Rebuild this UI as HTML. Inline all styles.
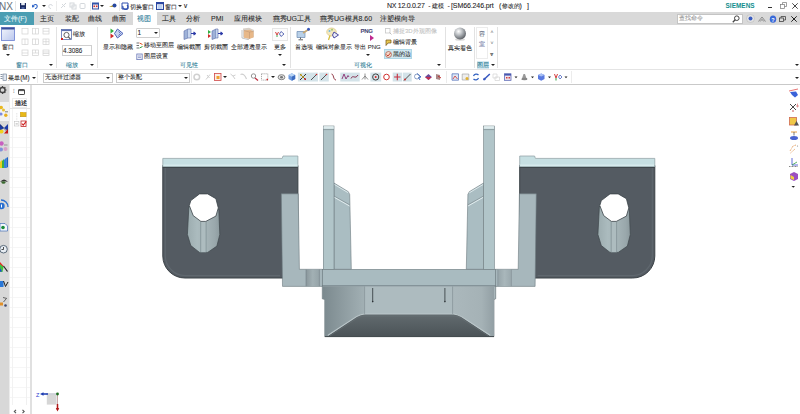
<!DOCTYPE html>
<html><head><meta charset="utf-8">
<style>
*{margin:0;padding:0;box-sizing:border-box}
html,body{width:800px;height:414px;overflow:hidden;background:#fff}
body{position:relative;font-family:"Liberation Sans",sans-serif;color:#333}
.a{position:absolute}
.t{position:absolute;white-space:nowrap;font-size:6px;line-height:7px;color:#2a2a2a;-webkit-text-stroke:0.08px currentColor}
.sep{position:absolute;width:1px;background:#e2e2e2}
.arr{position:absolute;width:0;height:0;border-left:2px solid transparent;border-right:2px solid transparent;border-top:2px solid #222}
</style></head><body>

<!-- TITLE BAR -->
<div class="t" style="left:-1px;top:0.5px;font-size:10px;line-height:11px;color:#66707a;letter-spacing:0px;-webkit-text-stroke:0">NX</div>
<div class="sep" style="left:15px;top:1px;height:10px;background:#e6e6e6"></div>
<!-- save -->
<svg class="a" style="left:20px;top:3px" width="6" height="6" viewBox="0 0 6 6"><rect x="0" y="0" width="6" height="6" fill="#1a2a60"/><rect x="1.2" y="0" width="3.6" height="2.2" fill="#e8eef6"/><rect x="1.5" y="4" width="3" height="2" fill="#4a60a0"/></svg>
<!-- undo -->
<svg class="a" style="left:32px;top:3px" width="6" height="6" viewBox="0 0 6 6"><path d="M1.5,3 C2,1 5.5,1 5.2,3.5 C5,5 4,5.5 3,5.5" fill="none" stroke="#2d63c8" stroke-width="1.1"/><path d="M0,1.5 L2.8,4 L0,4.5 Z" fill="#2d63c8"/></svg>
<div class="arr" style="left:41.5px;top:5px"></div>
<svg class="a" style="left:48px;top:3px" width="6" height="6" viewBox="0 0 6 6"><path d="M4.5,3 C4,1 0.5,1 0.8,3.5 C1,5 2,5.5 3,5.5" fill="none" stroke="#d0d4da" stroke-width="1"/></svg>
<div class="sep" style="left:56px;top:1px;height:10px;background:#ececec"></div>
<svg class="a" style="left:60px;top:2px" width="30" height="8" viewBox="0 0 30 8"><path d="M1,6 L6,1 M2,2 L5,5" stroke="#d4d8dc" stroke-width="1"/><rect x="10" y="1" width="4" height="4" fill="none" stroke="#d4d8dc"/><rect x="12" y="3" width="4" height="4" fill="none" stroke="#d4d8dc"/><rect x="20" y="1.5" width="5" height="5" rx="1" fill="none" stroke="#d4d8dc"/></svg>
<div class="sep" style="left:90px;top:1px;height:10px;background:#ececec"></div>
<svg class="a" style="left:92px;top:2px" width="7" height="8" viewBox="0 0 7 8"><rect x="0" y="0.5" width="7" height="7" fill="#3454a8"/><rect x="1" y="2.5" width="5" height="4" fill="#f4e6e6"/><rect x="1.5" y="3.5" width="1.5" height="1.5" fill="#d03030"/><rect x="4" y="3.5" width="1.5" height="1.5" fill="#d03030"/></svg>
<div class="arr" style="left:100px;top:5px"></div>
<svg class="a" style="left:109px;top:3px" width="8" height="6" viewBox="0 0 8 6"><path d="M0,4 L4,2 L6,4 Z" fill="#b8a040"/><circle cx="5.5" cy="2.5" r="2" fill="#2848a0"/></svg>
<div class="sep" style="left:119px;top:1px;height:10px;background:#ececec"></div>
<svg class="a" style="left:121px;top:2px" width="8" height="8" viewBox="0 0 8 8"><path d="M1,1 H7 V7 H1 Z" fill="#fff" stroke="#3050b0" stroke-width="1"/><path d="M2,4 A2.5,2.5 0 1 0 6,3" fill="none" stroke="#3050b0" stroke-width="1.2"/></svg>
<div class="t" style="left:130px;top:2.5px;font-size:6.2px;color:#2a2a2a">切换窗口</div>
<svg class="a" style="left:156px;top:2px" width="8" height="8" viewBox="0 0 8 8"><rect x="0.5" y="0.5" width="7" height="7" fill="#fff" stroke="#2a46a0" stroke-width="1"/><rect x="0.5" y="0.5" width="7" height="1.8" fill="#2a46a0"/><rect x="1.5" y="3" width="5" height="4" fill="#bcd0f0"/></svg>
<div class="t" style="left:165px;top:2.5px;font-size:6.2px;color:#2a2a2a">窗口</div>
<div class="arr" style="left:177.5px;top:5px"></div>
<div class="t" style="left:183px;top:1.5px;font-size:7px;color:#2a2a2a">&#x2228;</div>
<div class="t" style="left:387px;top:2px;font-size:7px;line-height:8px;color:#222;letter-spacing:-0.28px">NX 12.0.0.27</div>
<div class="t" style="left:428.3px;top:2px;font-size:7px;line-height:8px;color:#222">-</div>
<div class="t" style="left:431.5px;top:2px;font-size:6.3px;line-height:8px;color:#222">建模</div>
<div class="t" style="left:447.5px;top:2px;font-size:7px;line-height:8px;color:#222">-</div>
<div class="t" style="left:451px;top:2px;font-size:7px;line-height:8px;color:#222;letter-spacing:-0.1px">[SM66.246.prt</div>
<div class="t" style="left:499px;top:2px;font-size:7px;line-height:8px;color:#222">(</div>
<div class="t" style="left:502px;top:2.3px;font-size:5.8px;line-height:8px;color:#222">修改的</div>
<div class="t" style="left:519.5px;top:2px;font-size:7px;line-height:8px;color:#222">)</div>
<div class="t" style="left:527px;top:2px;font-size:7px;line-height:8px;color:#222">]</div>
<div class="t" style="left:725.5px;top:2.3px;font-size:6.4px;line-height:8px;color:#118e8e;font-weight:bold;letter-spacing:0.05px;transform:scaleY(1.12);-webkit-text-stroke:0">SIEMENS</div>
<div class="a" style="left:768px;top:7px;width:4px;height:1px;background:#333"></div>
<svg class="a" style="left:780px;top:2px" width="7" height="7" viewBox="0 0 7 7"><rect x="0.5" y="2.5" width="4" height="4" fill="none" stroke="#777" stroke-width="0.7"/><path d="M2.5,2.5 V0.5 H6.5 V4.5 H4.5" fill="none" stroke="#777" stroke-width="0.7"/></svg>
<svg class="a" style="left:791.5px;top:2.5px" width="6" height="6" viewBox="0 0 6 6"><path d="M0.3,0.3 L5.7,5.7 M5.7,0.3 L0.3,5.7" stroke="#333" stroke-width="0.9"/></svg>

<!-- TAB BAR -->
<div class="a" style="left:0;top:12px;width:800px;height:13px;background:#d9d9d9"></div>
<div class="a" style="left:0;top:12px;width:34px;height:13px;background:#4b9db2"></div>
<div class="t" style="left:4px;top:15px;color:#e8f5f8;font-size:7px;line-height:8px">文件(F)</div>
<div class="a" style="left:132.5px;top:12px;width:24.5px;height:13px;background:#fff"></div>
<div class="t" style="left:40px;top:15px;font-size:7px;line-height:8px;color:#2a2a2a">主页</div>
<div class="t" style="left:64.5px;top:15px;font-size:7px;line-height:8px;color:#2a2a2a">装配</div>
<div class="t" style="left:88px;top:15px;font-size:7px;line-height:8px;color:#2a2a2a">曲线</div>
<div class="t" style="left:112px;top:15px;font-size:7px;line-height:8px;color:#2a2a2a">曲面</div>
<div class="t" style="left:137px;top:15px;font-size:7px;line-height:8px;color:#2d7d99">视图</div>
<div class="t" style="left:162px;top:15px;font-size:7px;line-height:8px;color:#2a2a2a">工具</div>
<div class="t" style="left:186px;top:15px;font-size:7px;line-height:8px;color:#2a2a2a">分析</div>
<div class="t" style="left:211px;top:15px;font-size:7px;line-height:8px;color:#2a2a2a">PMI</div>
<div class="t" style="left:233.5px;top:15px;font-size:7px;line-height:8px;color:#2a2a2a">应用模块</div>
<div class="t" style="left:272.5px;top:15px;font-size:7px;line-height:8px;color:#2a2a2a">燕秀UG工具</div>
<div class="t" style="left:320px;top:15px;font-size:7px;line-height:8px;color:#2a2a2a">燕秀UG模具8.60</div>
<div class="t" style="left:380px;top:15px;font-size:7px;line-height:8px;color:#2a2a2a">注塑模向导</div>
<div class="a" style="left:676.5px;top:13.5px;width:66px;height:10px;background:#fff;border:1px solid #c4c4c4"></div>
<div class="t" style="left:679px;top:15px;font-size:6px;color:#9a9a9a">查找命令</div>
<svg class="a" style="left:732px;top:14.5px" width="8" height="8" viewBox="0 0 8 8"><circle cx="4.8" cy="3.2" r="2.3" fill="none" stroke="#444" stroke-width="1"/><path d="M3.2,4.8 L0.8,7.2" stroke="#444" stroke-width="1.3"/></svg>
<svg class="a" style="left:746px;top:14px" width="9" height="9" viewBox="0 0 9 9"><circle cx="4.5" cy="4.5" r="4" fill="#e4e4e4" stroke="#bbb" stroke-width="0.6"/><circle cx="4.5" cy="4.5" r="2" fill="#3a5cc0"/></svg>
<svg class="a" style="left:757.5px;top:15.5px" width="8" height="6" viewBox="0 0 8 6"><path d="M0.5,5.5 L4,1 L7.5,5.5 M2.2,5.5 L4,3.3 L5.8,5.5" fill="none" stroke="#777" stroke-width="0.8"/></svg>
<svg class="a" style="left:768.5px;top:14.5px" width="8" height="8" viewBox="0 0 8 8"><ellipse cx="4" cy="4.2" rx="3.2" ry="3.6" fill="#3a6ad8"/><text x="4" y="6.5" font-size="5.5" font-family="Liberation Sans" font-weight="bold" fill="#fff" text-anchor="middle">?</text></svg>
<svg class="a" style="left:779px;top:15.5px" width="7" height="6" viewBox="0 0 7 6"><rect x="0.5" y="2" width="4" height="3.5" fill="none" stroke="#444" stroke-width="0.8"/><path d="M2,2 V0.5 H6.5 V4 H4.5" fill="none" stroke="#444" stroke-width="0.8"/></svg>
<svg class="a" style="left:790.5px;top:15.5px" width="6" height="6" viewBox="0 0 6 6"><path d="M0.3,0.3 L5.7,5.7 M5.7,0.3 L0.3,5.7" stroke="#222" stroke-width="1"/></svg>

<!-- RIBBON -->
<!-- group window -->
<svg class="a" style="left:1px;top:27px" width="14" height="14" viewBox="0 0 14 14"><defs><linearGradient id="wg" x1="0" y1="0" x2="1" y2="1"><stop offset="0" stop-color="#f4f6fb"/><stop offset="1" stop-color="#b9c6ee"/></linearGradient></defs><rect x="0.5" y="0.5" width="13" height="13" fill="url(#wg)" stroke="#6a7fd0" stroke-width="0.8"/><rect x="0.5" y="0.5" width="13" height="2" fill="#3a4f9a"/></svg>
<div class="t" style="left:2px;top:44px">窗口</div>
<div class="arr" style="left:6px;top:53.5px"></div>
<svg class="a" style="left:21px;top:28px" width="29" height="28" viewBox="0 0 29 28"><g fill="none" stroke="#d2d2d2" stroke-width="0.7">
<rect x="1" y="0.5" width="6" height="5.5"/><rect x="11.5" y="0.5" width="6" height="5.5"/><rect x="22" y="0.5" width="6" height="5.5"/>
<rect x="1" y="11" width="6" height="5.5"/><rect x="11.5" y="11" width="6" height="5.5"/><rect x="22" y="11" width="6" height="5.5"/>
<rect x="1" y="22" width="6" height="5.5"/><rect x="11.5" y="22" width="6" height="5.5"/><rect x="22" y="22" width="6" height="5.5"/>
<path d="M14.5,0.5 V6 M22,3.2 H28 M4,11 V16.5 M14.5,11 V16.5 M22,13.7 H28 M25,11 V16.5 M1,25 H7 M11.5,25 H17.5 M14.5,22 V25 M22,24 H28 M22,25.5 H28"/></g></svg>
<div class="t" style="left:16px;top:61.5px;color:#2d7d95">窗口</div>
<div class="arr" style="left:49px;top:64px"></div>
<div class="sep" style="left:56px;top:27px;height:41px"></div>
<!-- group zoom -->
<svg class="a" style="left:61px;top:29px" width="11" height="11" viewBox="0 0 11 11"><rect x="0.5" y="0.5" width="10" height="10" fill="#fff" stroke="#5b6fb0" stroke-width="0.8"/><rect x="0.5" y="0.5" width="10" height="1.6" fill="#5b6fb0"/><circle cx="5.5" cy="6" r="2.6" fill="none" stroke="#555" stroke-width="0.9"/><path d="M7.3,7.8 L9.5,10" stroke="#555" stroke-width="1.1"/><rect x="0" y="9" width="2" height="2" fill="#d02020"/></svg>
<div class="t" style="left:73px;top:31px">缩放</div>
<div class="a" style="left:61.5px;top:44.5px;width:30.5px;height:11px;background:#fff;border:1px solid #cfcfcf"></div>
<div class="t" style="left:63px;top:46.5px;font-size:6.3px">4.3086</div>
<div class="t" style="left:66px;top:61.5px;color:#2d7d95">缩放</div>
<div class="arr" style="left:89.5px;top:64px"></div>
<div class="sep" style="left:97px;top:27px;height:41px"></div>
<!-- group visibility -->
<svg class="a" style="left:110px;top:28px" width="14" height="11" viewBox="0 0 14 11"><path d="M0.5,0.5 L4,3 L0.5,5.5 Z" fill="#30b040"/><path d="M0.5,5.5 L4,8 L0.5,10.5 Z" fill="#d02828"/><path d="M7.5,1 L13,5.5 L7.5,10 L4.5,5.5 Z" fill="#c8d4f0" stroke="#4c62b8" stroke-width="1"/><path d="M8.5,3.5 L10.5,5.5 L8.5,7.5" fill="none" stroke="#4c62b8" stroke-width="0.8"/></svg>
<div class="t" style="left:102.5px;top:44px">显示和隐藏</div>
<div class="a" style="left:135.5px;top:27.5px;width:24.5px;height:10px;background:#fff;border:1px solid #cfcfcf;border-radius:1px"></div>
<div class="t" style="left:137.5px;top:29px;font-size:6.5px;color:#222">1</div>
<div class="arr" style="left:153.5px;top:31.5px;border-width:2.3px 2.3px 0 2.3px"></div>
<svg class="a" style="left:136px;top:42px" width="7" height="7" viewBox="0 0 7 7"><path d="M0.5,1 H3 M0.5,3.5 H3 M0.5,6 H3" stroke="#333" stroke-width="0.7"/><path d="M3.5,1 L6.5,2.5" stroke="#e05020" stroke-width="1"/><path d="M3.5,6 L6.5,4.5" stroke="#30a040" stroke-width="1"/></svg>
<div class="t" style="left:144px;top:42px">移动至图层</div>
<svg class="a" style="left:136px;top:52.5px" width="7" height="7" viewBox="0 0 7 7"><rect x="0.8" y="1" width="5.4" height="5.6" fill="#eef0f8" stroke="#6c7ab8" stroke-width="0.8"/><path d="M2,3 H5 M2,4.5 H5" stroke="#6c7ab8" stroke-width="0.6"/></svg>
<div class="t" style="left:144px;top:52.5px">图层设置</div>
<svg class="a" style="left:183px;top:28px" width="13" height="12" viewBox="0 0 13 12"><path d="M1,3 L5,1 V10 L1,11.5 Z" fill="#9fb2d8" stroke="#5a6ca8" stroke-width="0.6"/><path d="M5,1 H8 V10 H5" fill="#c8d6ee" stroke="#5a6ca8" stroke-width="0.6"/><path d="M8,5.5 H12 M10.5,4 L12.5,5.5 L10.5,7" stroke="#2c3aa8" stroke-width="1.2" fill="none"/></svg>
<div class="t" style="left:177.3px;top:43.5px">编辑截面</div>
<svg class="a" style="left:207px;top:28px" width="16" height="12" viewBox="0 0 16 12"><path d="M1,2 L4,4 L1,6 Z" fill="#30b040"/><path d="M1,6 L4,8 L1,10 Z" fill="#d02828"/><path d="M5,3 L9,1 V10 L5,11.5 Z" fill="#9fb2d8" stroke="#5a6ca8" stroke-width="0.6"/><path d="M9,1 H11 V10 H9" fill="#c8d6ee" stroke="#5a6ca8" stroke-width="0.6"/><path d="M11,5.5 H15 M13.5,4 L15.5,5.5 L13.5,7" stroke="#2c3aa8" stroke-width="1.2" fill="none"/></svg>
<div class="t" style="left:204px;top:43.5px">剪切截面</div>
<svg class="a" style="left:241px;top:27px" width="14" height="13" viewBox="0 0 14 13"><path d="M2,1.5 L8,0.8 L13,3 V10 L8,12 L2,10.5 Z" fill="#d8d0c8"/><path d="M3,3.5 L9,2.8 L12.5,4.5 V10.5 L8.5,11.8 L3,10.8 Z" fill="#e8b888"/><path d="M3,3.5 L8.5,5 L12.5,4.5 M8.5,5 V11.8" stroke="#b89070" stroke-width="0.5" fill="none"/><path d="M1,3 V11 L8,12.8" stroke="#a8a8a8" stroke-width="0.7" fill="none"/></svg>
<div class="t" style="left:231px;top:43.5px">全部通透显示</div>
<div class="a" style="left:271.5px;top:27.5px;width:16.5px;height:13px;background:#fcfcfc;border:1px solid #e6e6e6"></div>
<svg class="a" style="left:275px;top:30px" width="10" height="8" viewBox="0 0 10 8"><path d="M0.5,2 L2,5 L3.5,2" fill="none" stroke="#d02828" stroke-width="0.9"/><path d="M2,5 V7" stroke="#30a040" stroke-width="0.9"/><path d="M6,1.5 L9,4 L6,6.5 L4.5,4 Z" fill="none" stroke="#5060b0" stroke-width="0.9"/></svg>
<div class="t" style="left:274px;top:43.5px">更多</div>
<div class="arr" style="left:278px;top:53.5px"></div>
<div class="t" style="left:179.5px;top:61.5px;color:#2d7d95">可见性</div>
<div class="arr" style="left:282px;top:64px"></div>
<div class="sep" style="left:289.5px;top:27px;height:41px"></div>
<!-- group visualization -->
<svg class="a" style="left:296px;top:27px" width="15" height="14" viewBox="0 0 15 14"><path d="M1,4.5 H9 V10.5 H1 Z" fill="#b8d0e8" stroke="#6a8ab0" stroke-width="0.7"/><path d="M4.5,10.5 V12 M2.5,12.8 H7" stroke="#555" stroke-width="0.9"/><path d="M7,6 L12.5,2.5" stroke="#c8a870" stroke-width="1.6"/><circle cx="12.5" cy="2.3" r="1.5" fill="#3a58b8"/></svg>
<div class="t" style="left:294.8px;top:44px">首选项</div>
<svg class="a" style="left:326px;top:27px" width="14" height="14" viewBox="0 0 14 14"><ellipse cx="5.5" cy="5" rx="4.8" ry="4" fill="#f2e8c0" stroke="#d8c070" stroke-width="0.6"/><circle cx="3.5" cy="4" r="1" fill="#70b8e0"/><circle cx="6" cy="2.8" r="1" fill="#a0c870"/><path d="M8,5 L12.5,8 L8,11 L6.5,8 Z" fill="#e8eaf8" stroke="#4a4aa0" stroke-width="1"/><path d="M4,8.5 L2.5,13" stroke="#d8c040" stroke-width="1.3"/></svg>
<div class="t" style="left:316px;top:44px">编辑对象显示</div>
<div class="t" style="left:360.5px;top:28px;font-size:6px;font-weight:bold;color:#4a4a78;letter-spacing:-0.3px">PNG</div>
<svg class="a" style="left:369.5px;top:34.5px" width="4" height="6" viewBox="0 0 4 6"><path d="M0,0 L4,3 L0,6 Z" fill="#c02890"/></svg>
<div class="t" style="left:354px;top:44px">导出 PNG</div>
<div class="arr" style="left:365.5px;top:53.5px"></div>
<div class="t" style="left:354px;top:61.5px;color:#2d7d95">可视化</div>
<svg class="a" style="left:384.5px;top:28px" width="7" height="7" viewBox="0 0 7 7"><rect x="0.5" y="0.5" width="4.5" height="4.5" fill="none" stroke="#c8c8c8" stroke-width="0.8"/><path d="M4.5,4.5 L6.5,6.5" stroke="#c0c0c0" stroke-width="1"/></svg>
<div class="t" style="left:393px;top:28px;color:#c2c2c2">捕捉3D外观图像</div>
<svg class="a" style="left:385px;top:39px" width="7" height="7" viewBox="0 0 7 7"><path d="M1,1 H6 V4 H3 L1,6.5 Z" fill="#e8c850" stroke="#705018" stroke-width="0.7"/></svg>
<div class="t" style="left:393px;top:39px">编辑背景</div>
<div class="a" style="left:383.5px;top:49px;width:28px;height:9.5px;background:#cfe6ef;border:1px solid #aed6e6"></div>
<svg class="a" style="left:384.5px;top:50.5px" width="7" height="7" viewBox="0 0 7 7"><circle cx="3.5" cy="3.5" r="3" fill="#f4d8c8" stroke="#a04030" stroke-width="0.6"/><path d="M1.5,3.5 L3,5 L5.5,2" fill="none" stroke="#c03020" stroke-width="0.9"/></svg>
<div class="t" style="left:393px;top:50.5px">黑的边</div>
<div class="arr" style="left:437px;top:64px"></div>
<div class="sep" style="left:445px;top:27px;height:41px"></div>
<!-- true shading -->
<svg class="a" style="left:453px;top:26.5px" width="14" height="14" viewBox="0 0 14 14"><defs><radialGradient id="sph" cx="0.38" cy="0.32" r="0.7"><stop offset="0" stop-color="#ffffff"/><stop offset="0.45" stop-color="#b8bcc0"/><stop offset="1" stop-color="#5a5e64"/></radialGradient></defs><ellipse cx="7" cy="12.5" rx="5" ry="1.2" fill="#d8d8d8"/><circle cx="7" cy="6.5" r="6" fill="url(#sph)"/></svg>
<div class="t" style="left:448.3px;top:44.5px">真实着色</div>
<div class="sep" style="left:474px;top:27px;height:41px"></div>
<!-- layers gallery -->
<div class="a" style="left:476px;top:27.4px;width:11.5px;height:32px;background:#fff;border:0.7px solid #ececec"></div>
<div class="t" style="left:479.3px;top:30.5px;font-size:5.5px;color:#70788a">容</div>
<div class="t" style="left:479.3px;top:41px;font-size:5.5px;color:#6a74a0">室</div>
<div class="t" style="left:490.5px;top:29px;font-size:5px;color:#777">&#x02C4;</div>
<div class="t" style="left:490.5px;top:40px;font-size:5px;color:#777">&#x02C5;</div>
<div class="t" style="left:490px;top:51px;font-size:6px;color:#2a2a2a">&#x2A54;</div>
<div class="a" style="left:476.5px;top:61px;width:12px;height:7.5px;background:#d5eaf2"></div>
<div class="t" style="left:477px;top:61.5px;color:#2d7d95">图层</div>
<div class="arr" style="left:490.5px;top:64px"></div>
<div class="sep" style="left:497px;top:27px;height:41px"></div>
<div class="arr" style="left:795px;top:64px"></div>
<div class="a" style="left:0;top:69px;width:800px;height:1px;background:#e4e4e4"></div>

<!-- TOOLBAR -->
<svg class="a" style="left:0px;top:72.5px" width="7" height="8" viewBox="0 0 7 8"><path d="M0.5,1.5 H2.5 M0.5,3.5 H2.5 M0.5,5.5 H2.5" stroke="#6a7a90" stroke-width="0.8"/><rect x="3" y="1" width="3.5" height="6.5" fill="#dfe6f0" stroke="#6a7a90" stroke-width="0.6"/></svg>
<div class="t" style="left:8.2px;top:74px;font-size:6.3px">菜单(M)</div>
<div class="arr" style="left:31.5px;top:76.5px"></div>
<div class="sep" style="left:37px;top:71px;height:12px;background:#ececec"></div>
<div class="a" style="left:42.5px;top:72.5px;width:70px;height:10px;background:#fff;border:1px solid #cbcbcb"></div>
<div class="t" style="left:44.5px;top:74px">无选择过滤器</div>
<div class="arr" style="left:106px;top:76.5px;border-width:2.3px 2.3px 0 2.3px"></div>
<div class="a" style="left:116px;top:72.5px;width:74px;height:10px;background:#fff;border:1px solid #cbcbcb"></div>
<div class="t" style="left:118px;top:74px">整个装配</div>
<div class="arr" style="left:184px;top:76.5px;border-width:2.3px 2.3px 0 2.3px"></div>
<div class="a" style="left:0;top:84px;width:800px;height:1px;background:#c9c9c9"></div>

<!-- toolbar icons -->
<div class="sep" style="left:190.5px;top:71px;height:12px;background:#e8e8e8"></div>
<svg class="a" style="left:190px;top:70px" width="385" height="14" viewBox="190 70 385 14">
<g fill="#d4e3e9">
<rect x="297.9" y="72.6" width="20.1" height="8.9"/><rect x="319.4" y="72.6" width="9.4" height="8.9"/>
<rect x="340.3" y="72.6" width="19.4" height="8.9"/><rect x="370.4" y="72.6" width="10.8" height="8.9"/>
<rect x="392.7" y="72.6" width="9.3" height="8.9"/><rect x="402.8" y="72.6" width="8.9" height="8.9"/>
</g>
<!-- gray gear -->
<circle cx="196.8" cy="77" r="2.8" fill="none" stroke="#d0d0d0" stroke-width="1.5"/>
<path d="M206,79.5 L210,74.5 M207,75 L209.5,78" stroke="#d0d0d0" stroke-width="1"/>
<rect x="214.5" y="73.5" width="6.5" height="7" fill="#fbeee6" stroke="#d04848" stroke-width="0.8"/><rect x="216.5" y="76" width="3" height="3" fill="#f0a030"/>
<path d="M230.5,74 L233,76 L235,79 M233,76 L235.5,75" stroke="#cfcfcf" stroke-width="1" fill="none"/>
<path d="M240.5,74.5 C243,73.5 245,75 246.5,79" stroke="#cfcfcf" stroke-width="1.2" fill="none"/>
<circle cx="253.5" cy="76" r="2.2" fill="none" stroke="#888" stroke-width="0.9"/><path d="M255,78 L258,80.5" stroke="#c03040" stroke-width="1.3"/>
<rect x="261.5" y="73.8" width="6.3" height="6.3" fill="none" stroke="#888" stroke-width="0.7" stroke-dasharray="1.2 0.8"/><rect x="266.5" y="78.8" width="1.5" height="1.5" fill="#d02828"/>
<ellipse cx="281.5" cy="77.2" rx="3.4" ry="2.5" fill="#e8e8e8" stroke="#777" stroke-width="0.9"/><ellipse cx="281.5" cy="77.2" rx="1.5" ry="1.2" fill="#777"/>
<path d="M288.5,75 L291.8,73.3 L295.2,75 V79 L291.8,80.8 L288.5,79 Z" fill="#6d9ae0"/><path d="M288.5,75 L291.8,76.8 L295.2,75 L291.8,73.3 Z" fill="#b8d4f4"/><path d="M291.8,76.8 V80.8 L295.2,79 V75 Z" fill="#3d6cc0"/>
<!-- snap group -->
<path d="M300,74 L306,80 M306,74 L300,80" stroke="#333" stroke-width="1"/><circle cx="301" cy="75" r="0.9" fill="#d8b020"/><circle cx="305" cy="79" r="0.9" fill="#d02828"/><circle cx="303" cy="77" r="0.9" fill="#d8b020"/>
<path d="M311,80 L317,74" stroke="#444" stroke-width="0.9"/><circle cx="316.5" cy="74.5" r="0.8" fill="#d02828"/>
<path d="M321,80 L327,74" stroke="#444" stroke-width="0.9"/><circle cx="326.5" cy="74.5" r="0.8" fill="#d02828"/>
<path d="M331.5,74 C334,74 333,80 336,80" stroke="#882838" stroke-width="0.9" fill="none"/>
<path d="M342,79 L344,74 L346,79 L348,75.5 L349,77" stroke="#8a3070" stroke-width="0.9" fill="none"/>
<path d="M351,78.5 C353,74 355,80 358,75" stroke="#883050" stroke-width="1" fill="none"/>
<path d="M362,79.5 L365,76 L368,79.5 M365,73.5 V79.5" stroke="#777" stroke-width="0.8" fill="none"/>
<circle cx="375.7" cy="77" r="3.1" fill="none" stroke="#333" stroke-width="0.9"/><circle cx="375.7" cy="77" r="1" fill="#d02828"/>
<circle cx="386.5" cy="77" r="2.8" fill="none" stroke="#d03030" stroke-width="1"/>
<path d="M397.3,73.8 V80.2 M394.1,77 H400.5" stroke="#c83040" stroke-width="1.1"/>
<path d="M404,80.5 L410.5,74" stroke="#444" stroke-width="0.9"/><circle cx="405" cy="79.5" r="0.9" fill="#d02828"/>
<path d="M417,73.5 L421,77 L418.5,77.5 L420,80" stroke="#3060c0" stroke-width="0.9" fill="none"/><circle cx="417" cy="76.5" r="2.5" fill="none" stroke="#5a7ab0" stroke-width="0.7"/>
<path d="M425,77 L428.5,74 L431.8,77 L428.5,80 Z" fill="#6a4a9a"/><path d="M425,77 L428.5,80 L431.8,77" fill="#c03050"/>
<path d="M436,74 L440,75 V80 L436,79 Z" fill="#aa8888"/><path d="M438,76 L441,78" stroke="#c03030" stroke-width="1"/>
</g>
<path d="M452,73.8 H458.5 V80.2 H452 Z" fill="#dde6f4" stroke="#4a6ab8" stroke-width="0.7"/><path d="M453,79 L455,76 L457.5,79" stroke="#d03030" stroke-width="0.8" fill="none"/>
<path d="M462.2,74 H468.8 V80 H462.2 Z" fill="#eeeeee" stroke="#999" stroke-width="0.6"/><circle cx="467" cy="78.5" r="1.5" fill="#e0b030"/>
<path d="M473.5,76 A3,3 0 0 1 478.5,75 M478.5,78 A3,3 0 0 1 473.5,79" stroke="#3060c0" stroke-width="1.2" fill="none"/>
<path d="M483.5,80 L489.8,74" stroke="#3858c0" stroke-width="1.5"/><circle cx="484.5" cy="79" r="1.2" fill="#3858c0"/>
<path d="M493,74 H497 V78 H493 Z M495,77 H499.5 V80.5 H495 Z" fill="none" stroke="#d4d4d4" stroke-width="0.7"/>
<rect x="504.5" y="73.8" width="6.5" height="6.5" fill="#f0e4ec" stroke="#4858b0" stroke-width="0.7"/><rect x="504.5" y="73.8" width="6.5" height="1.8" fill="#4858b0"/><rect x="506" y="77" width="1.5" height="1.5" fill="#d04040"/><rect x="508.5" y="77" width="1.5" height="1.5" fill="#d04040"/>
<path d="M514.5,76.5 H517.5 L516,78.2 Z" fill="#222"/>
<path d="M521.5,80 L523.5,74 H525 L527,80 Z" fill="#9a9a9a"/><ellipse cx="524.5" cy="79" rx="3" ry="1.3" fill="#888"/>
<path d="M531,76.5 H534 L532.5,78.2 Z" fill="#222"/>
<path d="M538,75 L541.2,73.5 L544.5,75 V79 L541.2,80.8 L538,79 Z" fill="#5a7ae0"/><path d="M538,75 L541.2,76.6 L544.5,75 L541.2,73.5 Z" fill="#a8c0f4"/>
<path d="M548,76.5 H551 L549.5,78.2 Z" fill="#222"/>
<path d="M554.5,74 L556,78 L557.5,74" stroke="#d02828" stroke-width="0.9" fill="none"/><path d="M556,78 V80.5" stroke="#30a040" stroke-width="1"/><path d="M558.5,77 L560,75 L562,77 L560,79 Z" fill="none" stroke="#4a64c0" stroke-width="0.8"/>
<path d="M564.5,76.5 H567.5 L566,78.2 Z" fill="#222"/>
</svg>
<div class="arr" style="left:222.5px;top:76px"></div>
<div class="arr" style="left:270.5px;top:76px"></div>
<div class="sep" style="left:446px;top:71px;height:12px;background:#ececec"></div>
<div class="sep" style="left:571px;top:71px;height:12px;background:#ececec"></div>
<div class="arr" style="left:795px;top:77px"></div>

<!-- LEFT STRIP -->
<div class="a" style="left:0;top:85px;width:8.5px;height:329px;background:#d8d8d8"></div>
<div class="a" style="left:0;top:101.5px;width:8.5px;height:19px;background:#f2f2f2"></div>
<div class="a" style="left:8.5px;top:85px;width:1.5px;height:329px;background:#ececec"></div>
<svg class="a" style="left:0;top:85px" width="10" height="230" viewBox="0 85 10 230">
<!-- gear -->
<circle cx="2.5" cy="90" r="2.6" fill="none" stroke="#444" stroke-width="1.5"/>
<path d="M2.5,86 V87.2 M2.5,92.8 V94 M6.5,90 H5.3 M5.3,87.2 L4.5,88 M5.3,92.8 L4.5,92" stroke="#444" stroke-width="1.2"/>
<!-- assembly nav -->
<circle cx="1.2" cy="107.5" r="1.8" fill="#e8b820"/><circle cx="3.5" cy="110" r="1.5" fill="#e8c030"/><circle cx="1" cy="114" r="1.6" fill="#7a8ae0"/><circle cx="5.8" cy="115.3" r="1.7" fill="#e8b020"/><path d="M5,111.8 H8" stroke="#555" stroke-width="0.7"/>
<!-- constraints -->
<path d="M0,124 L4,128 L0,131 Z" fill="#1a3aa8"/><path d="M8,124 L4,128 L8,131 Z" fill="#1a3aa8"/><path d="M0,124.5 L7.5,132" stroke="#222" stroke-width="0.5"/>
<circle cx="1.5" cy="131.5" r="2" fill="#f0d020"/><path d="M4,133.5 L8,129 V133.5 Z" fill="#c81818"/>
<!-- pink -->
<circle cx="1.5" cy="143.5" r="2.2" fill="#c860c0"/><circle cx="1" cy="149.5" r="2" fill="#8090d8"/><circle cx="5.5" cy="149" r="2" fill="#d8a0c8"/><path d="M4,145 H7.5" stroke="#666" stroke-width="0.6"/>
<!-- bars -->
<path d="M0,168 V162 L2,160 V168 Z" fill="#e8d020"/><path d="M2,168 V161 L4,159 V168 Z" fill="#40b040"/><path d="M4,168 V160 L6.5,157.5 V168 Z" fill="#3080e0"/><path d="M6.5,168 V158 L8,157 V167 Z" fill="#2060c0"/>
<!-- eye -->
<path d="M0,182 Q4,177 8,182 Q4,180.5 0,182 Z" fill="#333"/><ellipse cx="3.5" cy="182.5" rx="2" ry="1.3" fill="#3a6a30"/>
<!-- info wifi -->
<path d="M1,200 A7,7 0 0 1 8,207" stroke="#2a70d0" stroke-width="1.3" fill="none"/><circle cx="1.5" cy="206" r="3.2" fill="#2a70d0"/><rect x="1" y="204.5" width="1" height="3" fill="#fff"/>
<!-- green circle -->
<path d="M0,223.5 H5 L7.5,226 V231 H0 Z" fill="#f4f8fc" stroke="#2a5ab0" stroke-width="0.6"/><circle cx="3" cy="227.5" r="1.8" fill="#1a8a3a"/>
<!-- clock -->
<circle cx="3.5" cy="249.2" r="3.8" fill="#e8eef4" stroke="#5a6a7a" stroke-width="1"/><path d="M3.5,247 V249.5 H1.5" stroke="#222" stroke-width="0.8" fill="none"/>
<!-- rainbow -->
<path d="M0,262 L3.5,266 L0,272 Z" fill="#f02020"/><path d="M0,264 L3.5,267 L2.5,272 H0 Z" fill="#40c040"/><path d="M0,268 L2,271.5 H0 Z" fill="#2040e0"/><path d="M3.5,266 L7.5,271.5" stroke="#222" stroke-width="1.2"/>
<!-- blue arrow -->
<rect x="0" y="281" width="3.5" height="6" fill="#2a78d8"/><path d="M3.5,281 L5.5,286.5 L8,282" stroke="#222" stroke-width="1" fill="none"/>
<!-- orange -->
<path d="M3,297.5 L7,298.5 M6,299 L3.5,302" stroke="#444" stroke-width="0.8"/><rect x="0" y="302.5" width="3" height="3" fill="#e0902a"/><circle cx="5.5" cy="305.5" r="1.3" fill="#404a70"/>
</svg>
<!-- navigator -->
<div class="a" style="left:10px;top:85px;width:19.7px;height:329px;background:#fff"></div>
<div class="a" style="left:29.7px;top:85px;width:1.9px;height:329px;background:#e0e0e0"></div>
<div class="a" style="left:10px;top:128px;width:19.7px;height:277px;background:repeating-linear-gradient(to bottom,transparent 0,transparent 9px,#f6f6f6 9px,#f6f6f6 10px)"></div>
<div class="a" style="left:11.6px;top:108px;width:0.6px;height:300px;background:#f2f2f2"></div>
<div class="a" style="left:26.2px;top:108px;width:0.6px;height:300px;background:#f0f0f0"></div>
<div class="t" style="left:13px;top:87.5px;font-size:6px;color:#666">&#x205D;</div>
<svg class="a" style="left:17.5px;top:89px" width="7" height="6" viewBox="0 0 7 6"><rect x="0.5" y="0.5" width="6" height="5" rx="0.6" fill="none" stroke="#333" stroke-width="0.9"/><path d="M0.5,1.6 H6.5" stroke="#333" stroke-width="0.9"/></svg>
<div class="a" style="left:12px;top:98px;width:15px;height:10px;border:0.6px solid #ececec"></div>
<div class="t" style="left:15px;top:100px;font-size:5.6px;color:#222;letter-spacing:-0.1px;-webkit-text-stroke:0.2px #222">描述</div>
<div class="a" style="left:10px;top:107.5px;width:19.7px;height:0.6px;background:#e4e4e4"></div>
<svg class="a" style="left:13px;top:111px" width="15" height="17" viewBox="0 0 15 17"><path d="M3.8,2 V10.5" stroke="#bbb" stroke-width="0.5" stroke-dasharray="0.8 0.8"/><rect x="7.3" y="1.5" width="5.8" height="4.3" fill="#e8b818" stroke="#b08010" stroke-width="0.4"/><rect x="7.5" y="1" width="2.5" height="1.2" fill="#e8b818"/>
<rect x="1.5" y="10.7" width="4.4" height="4.3" fill="#fff" stroke="#bbb" stroke-width="0.5"/><path d="M2.6,12.9 H4.8" stroke="#666" stroke-width="0.5"/>
<rect x="8" y="10" width="5" height="5.5" fill="#fff" stroke="#c02828" stroke-width="0.8"/><path d="M8.8,12.5 L10.2,14.2 L13.3,10.3" stroke="#d02020" stroke-width="1.1" fill="none"/></svg>
<div class="a" style="left:10px;top:405px;width:19.7px;height:9px;background:#fff"></div>
<svg class="a" style="left:13px;top:409px" width="13" height="5" viewBox="0 0 13 5"><path d="M3,0.8 L1.3,2.5 L3,4.2 M9.5,0.8 L11.2,2.5 L9.5,4.2" fill="none" stroke="#555" stroke-width="1.1"/></svg>

<!-- right icons -->
<svg class="a" style="left:787px;top:87px" width="13" height="102" viewBox="787 87 13 102">
<path d="M789,91 L798,89" stroke="#e05050" stroke-width="0.8"/><path d="M790,92 L796,91.5 L798,95 L795,97.5 L792,95 Z" fill="#3a62d8"/>
<path d="M790,104 L796,110 M796,104 L790,110" stroke="#333" stroke-width="0.9"/><path d="M797.5,103.5 V107.5 M796,106 H799" stroke="#d06060" stroke-width="0.6"/><circle cx="793" cy="111" r="0.8" fill="#c04040"/>
<rect x="789.5" y="117.5" width="7" height="7.5" fill="#f0c848" stroke="#d06a50" stroke-width="0.8"/><path d="M794,125.5 L796.5,121 L799,125.5 Z" fill="#555"/>
<path d="M791,132 H797" stroke="#e8a040" stroke-width="1"/><path d="M794,132 V135.5" stroke="#444" stroke-width="0.7"/><ellipse cx="794" cy="138" rx="4" ry="2" fill="#4a64d0"/>
<path d="M790,151 L793,146 L796,145 M790.5,153 L795,149" stroke="#e0904a" stroke-width="0.8" stroke-dasharray="1 0.6" fill="none"/><circle cx="797.5" cy="146" r="0.6" fill="#888"/>
<path d="M792,158 V165 H798" stroke="#3a4ad0" stroke-width="0.8" fill="none"/><path d="M792,165 L797,162" stroke="#30a040" stroke-width="0.8"/><path d="M789,166.5 H798" stroke="#666" stroke-width="0.8" stroke-dasharray="1 0.5"/>
<path d="M790,174 L794,172 L798,174 V179 L794,181 L790,179 Z" fill="#9a50c0"/><path d="M790.5,175 L794,177 V180 L790.5,178.5 Z" fill="#f0d040"/>
<path d="M791.5,186 H795 L793.25,187.8 Z" fill="#222"/>
</svg>
<!-- WCS triad -->
<svg class="a" style="left:34px;top:384px" width="30" height="30" viewBox="34 384 30 30">
<rect x="46.8" y="394.8" width="9.8" height="9.8" fill="#d6d6d6"/>
<path d="M57.5,394 H46" stroke="#a8acb8" stroke-width="1"/>
<path d="M48,394 H42" stroke="#1a3ab0" stroke-width="1.5"/><path d="M40,394 L43.5,392.3 V395.7 Z" fill="#1a3ab0"/>
<path d="M57.5,394 V406" stroke="#c8a8a8" stroke-width="1"/>
<path d="M57.5,404 V410" stroke="#b01818" stroke-width="1.5"/><path d="M57.5,411.5 L55.8,408 H59.2 Z" fill="#b01818"/>
<circle cx="57.5" cy="394" r="1.4" fill="#1a6a1a"/>
<text x="36" y="396.5" font-family="Liberation Sans" font-size="5.5" fill="#3040d0">Z</text>
</svg>
<svg class="a" style="left:0;top:0" width="800" height="414" viewBox="0 0 800 414">
<defs>
<linearGradient id="bore" x1="0" x2="1" y1="0" y2="0">
<stop offset="0" stop-color="#9cacaf"/><stop offset="0.3" stop-color="#abbbbe"/><stop offset="0.55" stop-color="#a7b6b9"/><stop offset="0.85" stop-color="#9aa8ac"/><stop offset="1" stop-color="#8d9b9f"/>
</linearGradient>
<linearGradient id="trayL" x1="0" x2="1" y1="0" y2="0">
<stop offset="0" stop-color="#7b898e"/><stop offset="1" stop-color="#a2b0b4"/>
</linearGradient>
<linearGradient id="trayR" x1="0" x2="1" y1="0" y2="0">
<stop offset="0" stop-color="#abb8bc"/><stop offset="0.7" stop-color="#a5b2b6"/><stop offset="1" stop-color="#929fa4"/>
</linearGradient>
<linearGradient id="trayB" x1="0" x2="0" y1="0" y2="1">
<stop offset="0" stop-color="#626b6f"/><stop offset="1" stop-color="#4b5357"/>
</linearGradient>
<linearGradient id="cyl" x1="0" x2="1" y1="0" y2="0">
<stop offset="0" stop-color="#8a979c"/><stop offset="0.5" stop-color="#a2b0b4"/><stop offset="1" stop-color="#95a3a8"/>
</linearGradient>
<linearGradient id="cyl2" x1="0" x2="1" y1="0" y2="0">
<stop offset="0" stop-color="#96a4a9"/><stop offset="0.5" stop-color="#a9b7bb"/><stop offset="1" stop-color="#9aa8ad"/>
</linearGradient>
<g id="hole">
<path d="M188.9,206.4 L187.4,234.5 L190.8,245.6 L199.5,252.4 H207.7 L216.9,246.1 L219.8,234.5 L218.8,209.3 Z" fill="url(#bore)" stroke="#3e464b" stroke-width="0.7"/>
<path d="M200.9,221.4 H205.8 L206.3,252.2 H200.4 Z" fill="#adbcbf"/>
<path d="M200.7,221.4 V252.2 M206.1,221.4 V252.2" stroke="#76848a" stroke-width="0.6"/>
<path d="M199.5,193.9 L207.7,193.9 L215.9,198.7 L218.3,207.9 L215.9,216.1 L205.8,221.4 L200.9,221.4 L193.2,215.6 L189.3,205.5 L190.8,200.6 Z" fill="#ffffff" stroke="#3a4247" stroke-width="0.8"/>
</g>
<g id="half">
<!-- plate -->
<path d="M162.8,165.5 H297.9 V278 H185 A22,22 0 0 1 162.8,256 Z" fill="#545b62" stroke="#3b4247" stroke-width="1"/>
<path d="M165.3,168 V256 A20,20 0 0 0 185,275.6 H280" fill="none" stroke="#5f676e" stroke-width="1.2"/>
<!-- top band -->
<path d="M162.8,158.4 H282.2 L283,156 H297.9 V167 H162.8 Z" fill="#c6dfe2" stroke="#8d9ca1" stroke-width="0.7"/>
<line x1="163.5" y1="165.2" x2="297.5" y2="165.2" stroke="#d6eaec" stroke-width="1.4"/>
<line x1="162.8" y1="167.4" x2="297.9" y2="167.4" stroke="#3a4146" stroke-width="1"/>
<!-- L bar -->
<path d="M281.3,193.8 H298.2 L299.4,269.3 H322.5 V286.4 H282.5 Z" fill="#a7b7bc" stroke="#6d7a80" stroke-width="0.6"/>
<!-- gusset -->
<path d="M334,183 L348.3,191.7 L349.7,194.5 L351.3,269.3 H334 Z" fill="#aabdc2" stroke="#6c797e" stroke-width="0.6"/>
<line x1="334" y1="196" x2="349.7" y2="204.8" stroke="#7a878c" stroke-width="0.6"/>
<line x1="334.3" y1="197.3" x2="349.5" y2="206" stroke="#e2edef" stroke-width="1"/>
<line x1="334.3" y1="184.4" x2="348.3" y2="192.8" stroke="#e2edef" stroke-width="0.9"/>
<!-- post -->
<rect x="323.3" y="126" width="10.7" height="143.3" fill="#b1c5c9" stroke="#6f7d82" stroke-width="0.6"/>
<rect x="323.6" y="126.3" width="10.1" height="3" fill="#d4e4e6"/>
<line x1="323.8" y1="127" x2="333.5" y2="127" stroke="#f0f6f7" stroke-width="0.8"/>
<line x1="323.3" y1="129.6" x2="334" y2="129.6" stroke="#6f7d82" stroke-width="0.6"/>
</g>
</defs>
<use href="#half"/>
<use href="#half" transform="translate(817.6,0) scale(-1,1)"/>
<rect x="306" y="269.6" width="13.4" height="16.6" fill="url(#cyl)"/>
<path d="M306,269.6 V286.2 M319.4,269.6 V286.2" stroke="#6b777c" stroke-width="0.5"/>
<rect x="497.8" y="269.6" width="13.6" height="16.6" fill="url(#cyl2)"/>
<path d="M497.8,269.6 V286.2 M511.4,269.6 V286.2" stroke="#7a878c" stroke-width="0.5"/>
<use href="#hole"/>
<use href="#hole" transform="translate(410.5,0)"/>
<!-- rim -->
<rect x="322.3" y="269.4" width="173.4" height="16.6" fill="#a9bbc0" stroke="#6a777c" stroke-width="0.6"/>
<!-- tray body -->
<path d="M322.3,286 H495.7 V298.8 L494,299.5 V336.5 H324.8 V299.5 L322.3,298.8 Z" fill="#a9b7bb" stroke="#5e6a6f" stroke-width="0.6"/>
<path d="M324.8,286.5 H364.6 V314.5 L327,336 H324.8 V299.5 L322.6,298.8 V286.5 Z" fill="url(#trayL)"/>
<path d="M452.6,286.5 H494 V336 H491 L452.6,314.5 Z" fill="url(#trayR)"/>
<rect x="364.6" y="286.5" width="88" height="28" fill="#adbbbf"/>
<path d="M364.6,314 H453.4 C457,314 459,315 462,317 L491,336.5 H327 L356,317 C359,315 361,314 364.6,314 Z" fill="url(#trayB)"/>
<path d="M328,335.3 L356.5,316.6 C359.5,314.8 361.5,314 364.6,314 H453.4 C456.5,314 458.5,314.8 461.5,316.6 L490,335.3" fill="none" stroke="#bcc8cb" stroke-width="1.1"/>
<path d="M329.5,336 L357.5,318 C360,316.6 362,316 365,316 H453 C456,316 458,316.6 460.5,318 L488.5,336" fill="none" stroke="#6a7478" stroke-width="0.5"/>
<line x1="364.6" y1="286.5" x2="364.6" y2="314" stroke="#7d898e" stroke-width="0.6"/>
<line x1="452.6" y1="286.5" x2="452.6" y2="314" stroke="#7d898e" stroke-width="0.6"/>
<line x1="372.7" y1="288" x2="372.7" y2="301.5" stroke="#3c4448" stroke-width="0.9"/><circle cx="372.7" cy="301.6" r="0.8" fill="#2a3034"/>
<line x1="444.9" y1="288" x2="444.9" y2="301.5" stroke="#3c4448" stroke-width="0.9"/><circle cx="444.9" cy="301.6" r="0.8" fill="#2a3034"/>
<path d="M324.8,336.6 H494" stroke="#40484c" stroke-width="1"/>
</svg>

</body></html>
